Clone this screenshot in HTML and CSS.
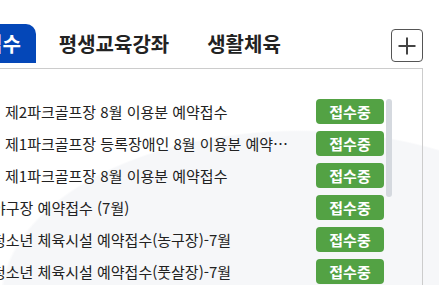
FILE: index.html
```html
<!DOCTYPE html>
<html lang="ko">
<head>
    <meta charset="UTF-8">
    <meta name="viewport" content="width=device-width, initial-scale=1.0">
    <title>접수 현황</title>
    <link rel="stylesheet" href="styles.css">
</head>
<body>
    <div class="board">
        <div class="tabs-bar">
            <ul class="tabs">
                <li class="tab active">접수</li>
                <li class="tab">평생교육강좌</li>
                <li class="tab">생활체육</li>
            </ul>
            <button class="more" aria-label="더보기">
                <svg width="20" height="20" viewBox="0 0 20 20">
                    <path d="M10 1.5v17M1.5 10h17" stroke="#444" stroke-width="2" fill="none"/>
                </svg>
            </button>
        </div>
        <div class="panel">
            <ul class="list">
                <li class="row indent">
                    <span class="title">제2파크골프장 8월 이용분 예약접수</span>
                    <span class="badge">접수중</span>
                </li>
                <li class="row indent">
                    <span class="title">제1파크골프장 등록장애인 8월 이용분 예약접수</span>
                    <span class="badge">접수중</span>
                </li>
                <li class="row indent">
                    <span class="title">제1파크골프장 8월 이용분 예약접수</span>
                    <span class="badge">접수중</span>
                </li>
                <li class="row">
                    <span class="title">야구장 예약접수 (7월)</span>
                    <span class="badge">접수중</span>
                </li>
                <li class="row">
                    <span class="title">청소년 체육시설 예약접수(농구장)-7월</span>
                    <span class="badge">접수중</span>
                </li>
                <li class="row">
                    <span class="title">청소년 체육시설 예약접수(풋살장)-7월</span>
                    <span class="badge">접수중</span>
                </li>
            </ul>
            <div class="scroll">
                <div class="thumb"></div>
            </div>
        </div>
    </div>
</body>
</html>
```

FILE: styles.css
```css
html, body {
    margin: 0;
    padding: 0;
    height: 100%;
    overflow: hidden;
}
body {
    font-family: "Noto Sans CJK KR", "Noto Sans", sans-serif;
    color: #222;
    background: #fff radial-gradient(ellipse 300px 170px at 300px 300px, #f6f7f9 99%, transparent 100%) no-repeat;
}
.board {
    width: 454px;
    margin-left: -31px;
}
.tabs-bar {
    display: flex;
    justify-content: space-between;
    align-items: flex-start;
    padding-top: 24px;
    height: 44px;
}
.tabs {
    display: flex;
    gap: 8px;
    list-style: none;
    margin: 0;
    padding: 0;
}
.tab {
    height: 39px;
    line-height: 39px;
    padding: 0 15px;
    font-size: 20px;
    font-weight: 700;
    color: #222;
}
.tab.active {
    background: #0447b8;
    color: #fff;
    border-radius: 10px 10px 0 0;
}
.more {
    width: 32px;
    height: 33px;
    margin-top: 5px;
    padding: 0;
    display: flex;
    align-items: center;
    justify-content: center;
    background: #fff;
    border: 1.5px solid #555;
    border-radius: 4px;
}
.panel {
    box-sizing: border-box;
    display: flex;
    align-items: flex-start;
    border-top: 1px solid #ccc;
    border-right: 1px solid #ccc;
    padding: 30px 30px 0 0;
    height: 217px;
}
.list {
    flex: 1;
    min-width: 0;
    list-style: none;
    margin: 0;
    padding: 0 0 0 23px;
    display: flex;
    flex-direction: column;
    gap: 7px;
}
.row {
    display: flex;
    align-items: center;
    height: 25px;
}
.row.indent {
    padding-left: 13px;
}
.title {
    flex: 1;
    min-width: 0;
    font-size: 15px;
    white-space: nowrap;
    overflow: hidden;
    text-overflow: ellipsis;
}
.badge {
    flex: none;
    width: 68px;
    height: 25px;
    margin-left: 21px;
    line-height: 25px;
    text-align: center;
    font-size: 15px;
    font-weight: 700;
    color: #fff;
    background: #53a244;
    border-radius: 4px;
}
.scroll {
    flex: none;
    width: 6px;
    margin-left: 2px;
}
.thumb {
    height: 98px;
    background: #d5d9df;
    border-radius: 3px;
}
```
